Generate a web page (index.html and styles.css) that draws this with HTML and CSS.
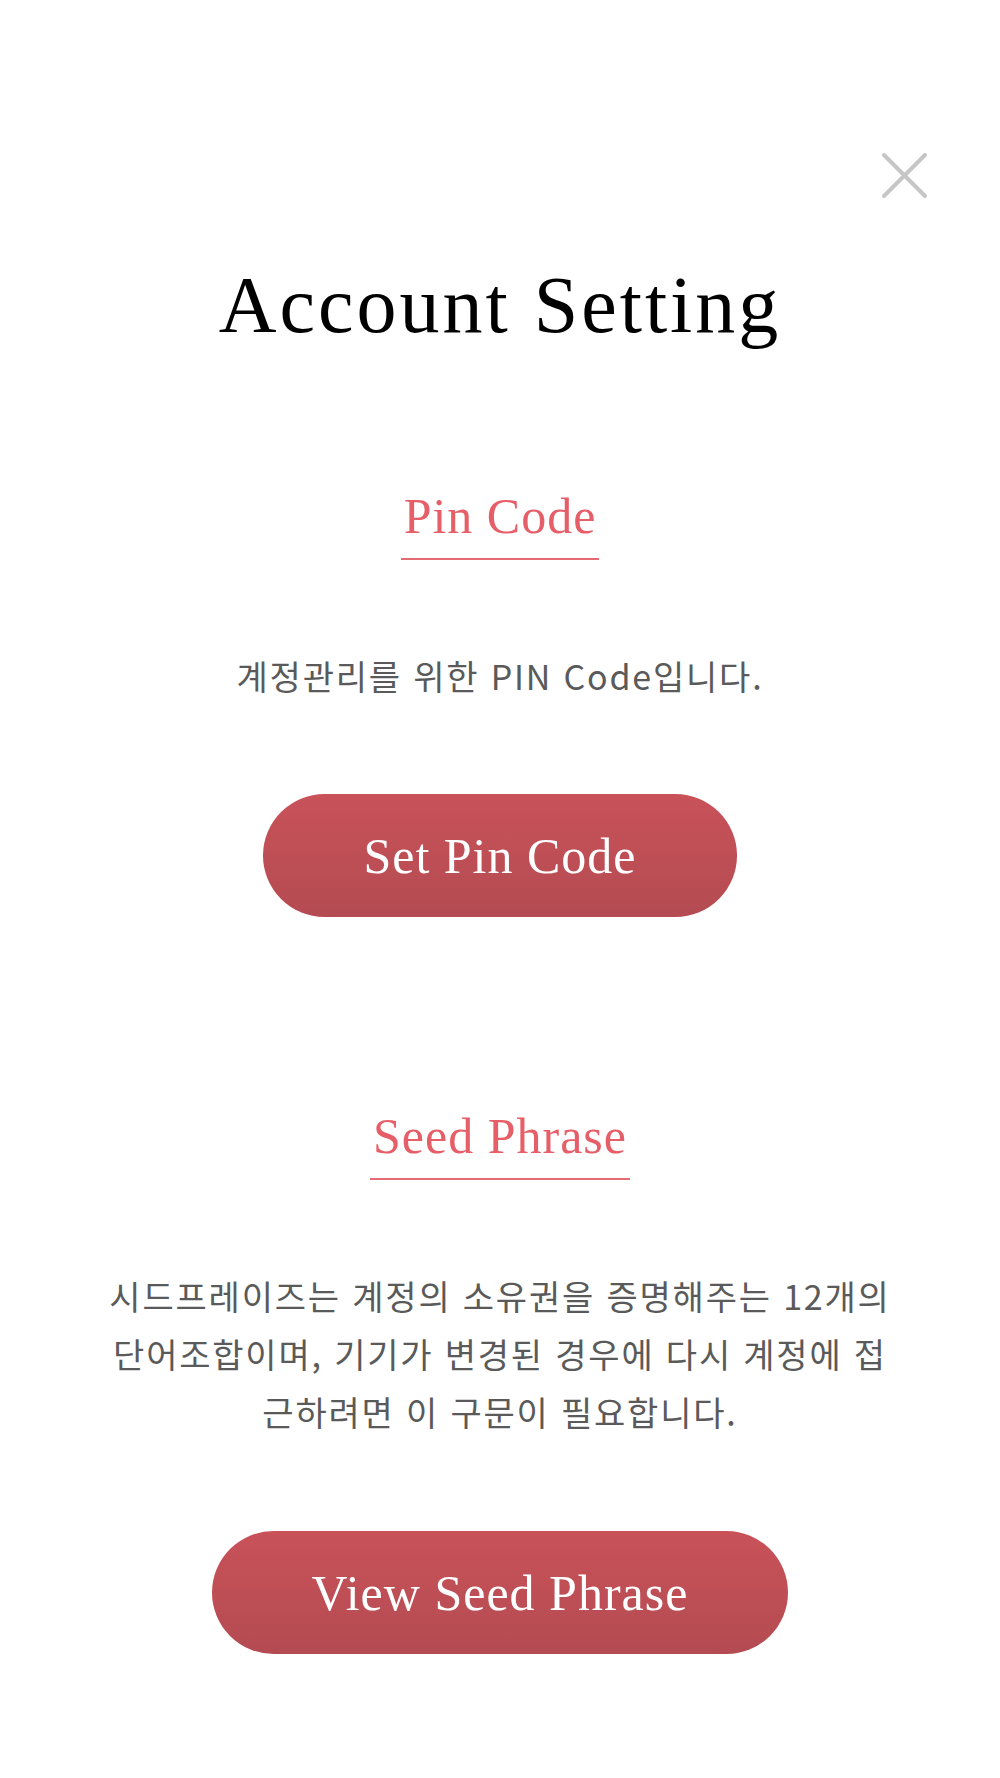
FILE: index.html
```html
<!DOCTYPE html>
<html lang="ko">
<head>
<meta charset="utf-8">
<title>Account Setting</title>
<link rel="stylesheet" href="styles.css">
</head>
<body>
<div class="page">
  <header class="topbar">
    <button class="close" aria-label="Close">
      <svg width="45" height="45" viewBox="0 0 45 45"><path d="M2 2 L43 43 M43 2 L2 43" stroke="#c6c6c6" stroke-width="4" stroke-linecap="round" fill="none"/></svg>
    </button>
  </header>
  <h1 class="title">Account Setting</h1>

  <section class="section section-pin">
    <h2 class="heading">Pin Code</h2>
    <p class="desc">계정관리를 위한 PIN Code입니다.</p>
    <button class="action">Set Pin Code</button>
  </section>

  <section class="section section-seed">
    <h2 class="heading">Seed Phrase</h2>
    <p class="desc">시드프레이즈는 계정의 소유권을 증명해주는 12개의<br>단어조합이며, 기기가 변경된 경우에 다시 계정에 접<br>근하려면 이 구문이 필요합니다.</p>
    <button class="action">View Seed Phrase</button>
  </section>
</div>
</body>
</html>
```

FILE: styles.css
```css
html, body {
  margin: 0;
  padding: 0;
  background: #ffffff;
}

.page {
  width: 1000px;
  min-height: 1778px;
  display: flex;
  flex-direction: column;
  align-items: center;
}

.topbar {
  align-self: stretch;
  display: flex;
  justify-content: flex-end;
  padding: 153px 73px 0 0;
}

.close {
  width: 45px;
  height: 45px;
  padding: 0;
  margin: 0;
  border: 0;
  background: transparent;
  display: block;
}

.close svg {
  display: block;
}

.title {
  margin: 57px 0 0;
  font-family: "Liberation Serif", "Times New Roman", serif;
  font-weight: normal;
  font-size: 80px;
  line-height: 100px;
  letter-spacing: 3px;
  color: #000000;
}

.section {
  display: flex;
  flex-direction: column;
  align-items: center;
}

.section-pin {
  margin-top: 131px;
}

.section-seed {
  margin-top: 189px;
}

.heading {
  margin: 0;
  padding: 0 3px 12px;
  font-family: "Liberation Serif", "Times New Roman", serif;
  font-weight: normal;
  font-size: 50px;
  line-height: 60px;
  letter-spacing: 1px;
  color: #e65f68;
  border-bottom: 2px solid #e66a72;
}

.desc {
  margin: 87px 0 0;
  font-family: "Noto Sans CJK KR", "Noto Sans", sans-serif;
  font-size: 34px;
  line-height: 58px;
  letter-spacing: 1.8px;
  color: #5a5a5a;
  text-align: center;
}

.action {
  margin-top: 89px;
  height: 123px;
  padding: 0 100px;
  border: 0;
  border-radius: 62px;
  background: linear-gradient(180deg, #c95259 0%, #b44b52 100%);
  color: #ffffff;
  font-family: "Liberation Serif", "Times New Roman", serif;
  font-size: 50px;
  letter-spacing: 1px;
  display: flex;
  align-items: center;
  justify-content: center;
}

.section-seed .action {
  margin-top: 90px;
}
```
